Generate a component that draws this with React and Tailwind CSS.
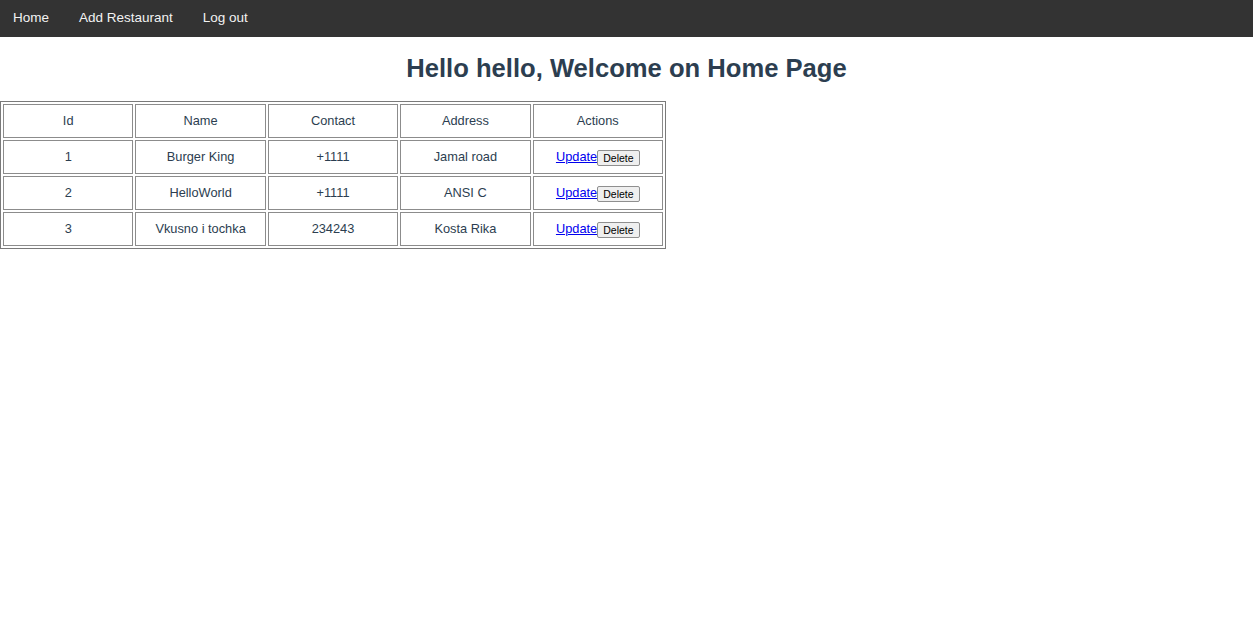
const restaurants = [
  { id: 1, name: 'Burger King', contact: '+1111', address: 'Jamal road' },
  { id: 2, name: 'HelloWorld', contact: '+1111', address: 'ANSI C' },
  { id: 3, name: 'Vkusno i tochka', contact: '234243', address: 'Kosta Rika' },
];

function Header() {
  return (
    <nav className="flex h-[37px] items-center gap-[30px] bg-[#333333] pl-[13px] text-[13.5px] text-[#f2f2f2]">
      <a href="#">Home</a>
      <a href="#">Add Restaurant</a>
      <a href="#">Log out</a>
    </nav>
  );
}

function Cell({ children }) {
  return (
    <td className="h-[34px] w-[130.4px] border border-[#8c8c8c] p-0 text-center align-middle">
      {children}
    </td>
  );
}

export default function App() {
  return (
    <div className="min-h-[643px] bg-white text-[#2c3e50]" style={{ fontFamily: '"Liberation Sans", Arial, sans-serif' }}>
      <Header />
      <h1 className="mt-[17px] mb-[19px] text-center text-[25.6px] font-bold leading-[28px]">
        Hello hello, Welcome on Home Page
      </h1>
      <table className="border-separate border-spacing-[2px] border border-[#7a7a7a] text-[12.8px]">
        <thead>
          <tr>
            <Cell>Id</Cell>
            <Cell>Name</Cell>
            <Cell>Contact</Cell>
            <Cell>Address</Cell>
            <Cell>Actions</Cell>
          </tr>
        </thead>
        <tbody>
          {restaurants.map(r => (
            <tr key={r.id}>
              <Cell>{r.id}</Cell>
              <Cell>{r.name}</Cell>
              <Cell>{r.contact}</Cell>
              <Cell>{r.address}</Cell>
              <Cell>
                <a href="#" className="text-[#0000ee] underline">Update</a>
                <button className="rounded-[2px] border border-[#8f8f8f] bg-[#efefef] px-[5px] py-[1px] align-middle text-[10.5px] leading-[12px] text-black">
                  Delete
                </button>
              </Cell>
            </tr>
          ))}
        </tbody>
      </table>
    </div>
  );
}
